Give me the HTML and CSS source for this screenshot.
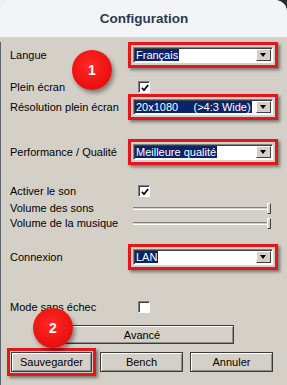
FILE: index.html
```html
<!DOCTYPE html>
<html>
<head>
    <title>Configuration</title>
    <link rel="stylesheet" href="styles.css">
</head>
<body>
    <div class="window">
        <div class="title-bar">Configuration</div>
        <div class="panel">
            <div class="row row-langue">
                <span class="label">Langue</span>
                <div class="select marked"><span class="value">Français</span><span class="drop"></span></div>
            </div>
            <div class="row row-small row-fullscreen">
                <span class="label">Plein écran</span>
                <span class="checkbox"><svg viewBox="0 0 8 8" width="8" height="8"><path d="M0.8 3.8 L3 6.2 L7.2 1" fill="none" stroke="#000" stroke-width="1.7"/></svg></span>
            </div>
            <div class="row row-resolution">
                <span class="label">Résolution plein écran</span>
                <div class="select marked"><span class="value">20x1080     (&gt;4:3 Wide)</span><span class="drop"></span></div>
            </div>
            <div class="row row-quality">
                <span class="label">Performance / Qualité</span>
                <div class="select marked"><span class="value">Meilleure qualité</span><span class="drop"></span></div>
            </div>
            <div class="row row-small row-sound">
                <span class="label">Activer le son</span>
                <span class="checkbox"><svg viewBox="0 0 8 8" width="8" height="8"><path d="M0.8 3.8 L3 6.2 L7.2 1" fill="none" stroke="#000" stroke-width="1.7"/></svg></span>
            </div>
            <div class="row row-small row-volume">
                <span class="label">Volume des sons</span>
                <div class="slider"><span class="groove"></span><span class="thumb"></span></div>
            </div>
            <div class="row row-small row-music">
                <span class="label">Volume de la musique</span>
                <div class="slider"><span class="groove"></span><span class="thumb"></span></div>
            </div>
            <div class="row row-connection">
                <span class="label">Connexion</span>
                <div class="select marked"><span class="value">LAN</span><span class="drop"></span></div>
            </div>
            <div class="row row-small row-safe">
                <span class="label">Mode sans échec</span>
                <span class="checkbox"></span>
            </div>
            <button class="btn btn-advanced">Avancé</button>
            <div class="button-row">
                <button class="btn marked-btn">Sauvegarder</button>
                <button class="btn">Bench</button>
                <button class="btn">Annuler</button>
            </div>
        </div>
        <span class="step step-1">1</span>
        <span class="step step-2">2</span>
    </div>
</body>
</html>
```

FILE: styles.css
```css
html, body {
    margin: 0;
    padding: 0;
}

body {
    width: 287px;
    height: 385px;
    overflow: hidden;
    background: linear-gradient(to right, #eef0f4 50%, #2b2b2b 50%);
    font-family: "Liberation Sans", Arial, sans-serif;
    font-size: 11px;
    color: #000;
}

.window {
    position: relative;
    height: 385px;
    background-color: #d4d0c8;
    border-radius: 12px 12px 0 0;
    overflow: hidden;
}

.title-bar {
    height: 37px;
    line-height: 37px;
    text-align: center;
    background-color: #f3f4f8;
    color: #2c3a50;
    font-size: 13.5px;
    font-weight: bold;
    padding-left: 1px;
}

.panel {
    padding-left: 9px;
    height: 348px;
    border-left: 1px solid #5b6270;
    box-sizing: border-box;
}

.row {
    display: flex;
    align-items: center;
    height: 26px;
}

.row-small {
    height: 14px;
}

.label {
    width: 123px;
    flex-shrink: 0;
}

.row-langue { margin-top: 5px; }
.row-fullscreen { margin-top: 12px; }
.row-resolution { margin-top: 0; }
.row-quality { margin-top: 19px; }
.row-sound { margin-top: 19px; }
.row-volume { margin-top: 3px; }
.row-music { margin-top: 1px; }
.row-connection { margin-top: 14px; }
.row-safe { margin-top: 30px; }

.select {
    display: flex;
    align-items: center;
    width: 140px;
    height: 16px;
    box-sizing: border-box;
    padding: 1px;
    background-color: #fff;
    border: 1px solid;
    border-color: #808080 #fff #fff #808080;
}

.marked {
    box-shadow: inset 1px 1px 0 #404040,
                0 0 0 2px #d4d0c8,
                0 0 0 5px #e3161b,
                2px 2px 3px 5px rgba(0, 0, 0, 0.45);
}

.value {
    background-color: #0a246a;
    color: #fff;
    line-height: 12px;
    padding: 0 1px;
    white-space: pre;
}

.drop {
    position: relative;
    margin-left: auto;
    width: 15px;
    height: 12px;
    box-sizing: border-box;
    background-color: #d4d0c8;
    border: 1px solid;
    border-color: #fff #404040 #404040 #fff;
}

.drop::after {
    content: "";
    position: absolute;
    left: 3px;
    top: 3px;
    border-top: 4px solid #000;
    border-left: 3.5px solid transparent;
    border-right: 3.5px solid transparent;
}

.checkbox {
    display: flex;
    align-items: center;
    justify-content: center;
    width: 12px;
    height: 12px;
    margin-left: 5px;
    box-sizing: border-box;
    background-color: #fff;
    border: 1px solid;
    border-color: #808080 #fff #fff #808080;
    box-shadow: inset 1px 1px 0 #404040;
}

.checkbox svg {
    display: block;
    margin: 1px 0 0 1px;
}

.slider {
    display: flex;
    align-items: center;
    width: 138px;
    height: 14px;
}

.groove {
    flex: 1;
    height: 1px;
    border-top: 1px solid #808080;
    border-bottom: 1px solid #fff;
}

.thumb {
    width: 4px;
    height: 11px;
    margin-left: -4px;
    box-sizing: border-box;
    background-color: #d4d0c8;
    border: 1px solid;
    border-color: #fff #404040 #404040 #fff;
}

.btn {
    display: block;
    height: 20px;
    width: 83px;
    padding: 0;
    font-family: "Liberation Sans", Arial, sans-serif;
    font-size: 11px;
    color: #000;
    background-color: #d4d0c8;
    border: 1px solid #3a3a3a;
    box-shadow: inset 1px 1px 0 #fff, inset -1px -1px 0 #909090;
}

.btn-advanced {
    width: 184px;
    height: 19px;
    margin: 11px 0 0 40px;
}

.button-row {
    display: flex;
    gap: 7px;
    margin-top: 8px;
    margin-left: 1px;
}

.marked-btn {
    width: 81px;
    margin-right: 1px;
    box-shadow: inset 1px 1px 0 #fff,
                inset -1px -1px 0 #909090,
                0 0 0 1px #d4d0c8,
                0 0 0 4px #e3161b,
                2px 2px 3px 4px rgba(0, 0, 0, 0.45);
}

.step {
    position: absolute;
    width: 40px;
    height: 40px;
    line-height: 40px;
    border-radius: 50%;
    text-align: center;
    color: #fff;
    font-size: 14px;
    font-weight: bold;
    background: radial-gradient(circle at 45% 40%, #ff2a26 0%, #ee1412 55%, #d40d0d 100%);
    box-shadow: 2px 3px 4px rgba(0, 0, 0, 0.4);
}

.step-1 {
    left: 72px;
    top: 50px;
}

.step-2 {
    left: 33px;
    top: 308px;
}
```
